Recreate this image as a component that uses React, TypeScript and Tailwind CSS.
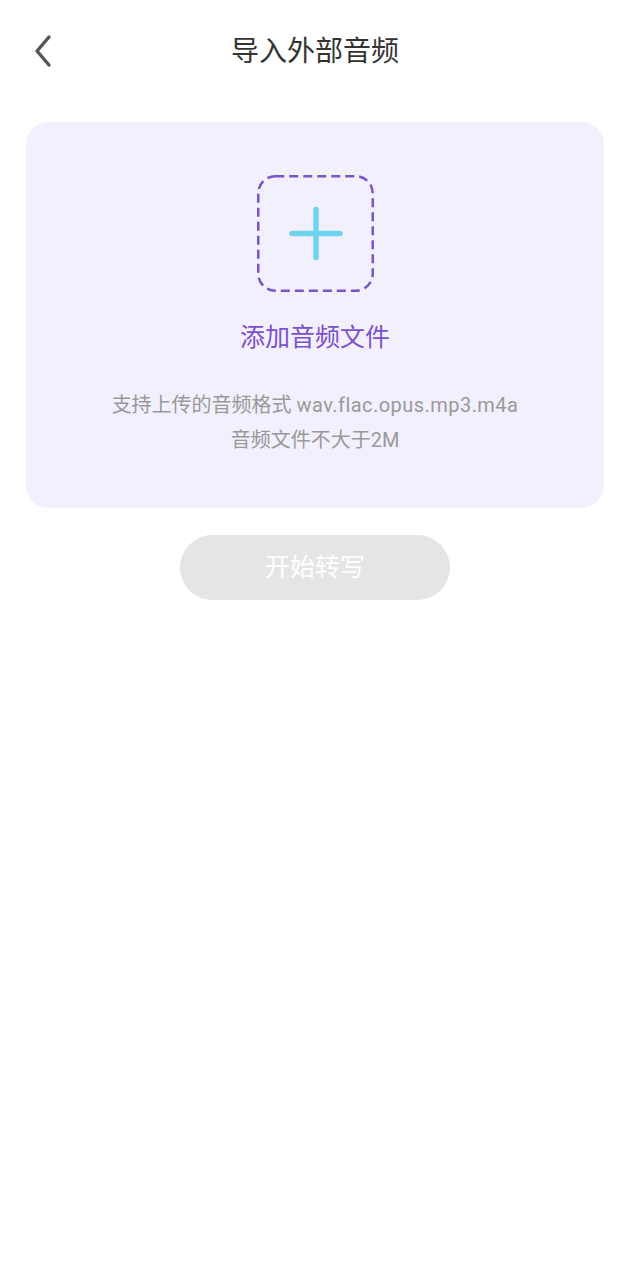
import React from "react";

export default function App() {
  return (
    <div
      className="w-[630px] h-[1280px] bg-white"
      style={{ fontFamily: 'Roboto, "Noto Sans CJK SC", sans-serif' }}
    >
      <div className="relative h-[104px] flex items-start justify-center pt-[30px]">
        <div className="absolute left-[30px] top-[34px]">
          <svg width="26" height="34" viewBox="0 0 26 34" fill="none">
            <path d="M19 3 L7 17 L19 31" stroke="#555" strokeWidth="3.4" strokeLinecap="round" strokeLinejoin="round" />
          </svg>
        </div>
        <div className="text-[28px] leading-[44px] text-[#333]">导入外部音频</div>
      </div>
      <div className="mx-[26px] mt-[18px] h-[386px] rounded-[22px] bg-[#f3f0fd] flex flex-col items-center pt-[53px]">
        <div className="w-[117px] h-[117px]">
          <svg width="117" height="117" viewBox="0 0 117 117" fill="none">
            <rect x="1.25" y="1.25" width="114.5" height="114.5" rx="17" stroke="#7a55c8" strokeWidth="2.5" strokeDasharray="9 5" />
            <path d="M35 58.5 H83 M59 34.5 V82.5" stroke="#6dd3ef" strokeWidth="5.5" strokeLinecap="round" />
          </svg>
        </div>
        <div className="mt-[28px] text-[25px] leading-[36px] text-[#7b50cf]">添加音频文件</div>
        <div className="mt-[32px] text-[20px] leading-[35px] text-[#999] text-center">
          <div>
            支持上传的音频格式 <span className="tracking-[0.45px]">wav.flac.opus.mp3.m4a</span>
          </div>
          <div>音频文件不大于2M</div>
        </div>
      </div>
      <div className="flex justify-center mt-[27px]">
        <div className="w-[270px] h-[65px] rounded-full bg-[#e5e5e5] flex items-center justify-center text-white text-[25px]">
          开始转写
        </div>
      </div>
    </div>
  );
}
